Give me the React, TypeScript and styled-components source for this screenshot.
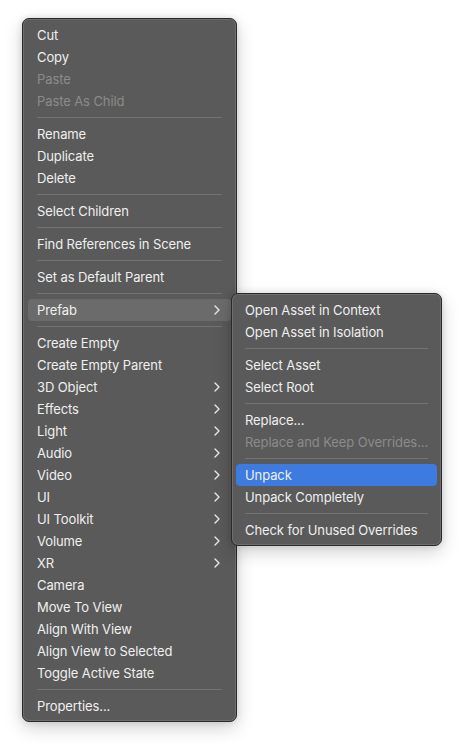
import React from "react";
import styled, { createGlobalStyle } from "styled-components";

const Global = createGlobalStyle`
  html, body { margin: 0; padding: 0; background: #ffffff; }
  body { font-family: Inter, "Liberation Sans", sans-serif; }
  * { box-sizing: border-box; }
`;

const Page = styled.div`
  padding: 18px 0 0 22px;
  width: 465px;
  height: 749px;
`;

const Menu = styled.div<{ $width: number }>`
  width: ${(p) => p.$width}px;
  background: #5a5a5a;
  border: 1px solid #2a2a2a;
  border-radius: 7px;
  box-shadow: inset 0 0 0 1px rgba(255, 255, 255, 0.12), 0 6px 18px rgba(0, 0, 0, 0.18),
    0 0 6px rgba(0, 0, 0, 0.12);
  padding: 5px 5px 4px;
  display: flex;
  flex-direction: column;
`;

const MainMenu = styled(Menu)`
  padding: 5px 5px 4px 5px;
`;

const SubMenu = styled(Menu)`
  position: absolute;
  left: 100%;
  top: -6px;
  z-index: 2;
  padding: 5px 4px 4px 4px;
`;

const Row = styled.div<{ $disabled?: boolean; $state?: "hover" | "active" }>`
  position: relative;
  height: 22px;
  display: flex;
  align-items: center;
  justify-content: space-between;
  padding: 0 11px 0 9px;
  border-radius: 4px;
  font-size: 13px;
  letter-spacing: -0.1px;
  color: ${(p) => (p.$disabled ? "#8b8b8b" : "#efefef")};
  background: ${(p) =>
    p.$state === "hover" ? "#6b6b6b" : p.$state === "active" ? "#3d7be0" : "transparent"};
  white-space: nowrap;
`;

const Separator = styled.div`
  height: 11px;
  display: flex;
  align-items: center;
  padding: 0 9px;
  &::after {
    content: "";
    flex: 1;
    height: 1px;
    background: #737373;
  }
`;

const Chevron = () => (
  <svg width="6" height="10" viewBox="0 0 6 10" fill="none">
    <path d="M1 1l4 4-4 4" stroke="#e8e8e8" strokeWidth="1.4" strokeLinecap="round" strokeLinejoin="round" />
  </svg>
);

type Item =
  | { sep: true }
  | { label: string; disabled?: boolean; sub?: boolean; state?: "hover" | "active"; children?: Item[] };

const prefabItems: Item[] = [
  { label: "Open Asset in Context" },
  { label: "Open Asset in Isolation" },
  { sep: true },
  { label: "Select Asset" },
  { label: "Select Root" },
  { sep: true },
  { label: "Replace..." },
  { label: "Replace and Keep Overrides...", disabled: true },
  { sep: true },
  { label: "Unpack", state: "active" },
  { label: "Unpack Completely" },
  { sep: true },
  { label: "Check for Unused Overrides" },
];

const mainItems: Item[] = [
  { label: "Cut" },
  { label: "Copy" },
  { label: "Paste", disabled: true },
  { label: "Paste As Child", disabled: true },
  { sep: true },
  { label: "Rename" },
  { label: "Duplicate" },
  { label: "Delete" },
  { sep: true },
  { label: "Select Children" },
  { sep: true },
  { label: "Find References in Scene" },
  { sep: true },
  { label: "Set as Default Parent" },
  { sep: true },
  { label: "Prefab", sub: true, state: "hover", children: prefabItems },
  { sep: true },
  { label: "Create Empty" },
  { label: "Create Empty Parent" },
  { label: "3D Object", sub: true },
  { label: "Effects", sub: true },
  { label: "Light", sub: true },
  { label: "Audio", sub: true },
  { label: "Video", sub: true },
  { label: "UI", sub: true },
  { label: "UI Toolkit", sub: true },
  { label: "Volume", sub: true },
  { label: "XR", sub: true },
  { label: "Camera" },
  { label: "Move To View" },
  { label: "Align With View" },
  { label: "Align View to Selected" },
  { label: "Toggle Active State" },
  { sep: true },
  { label: "Properties..." },
];

const renderItems = (items: Item[]) =>
  items.map((it, i) =>
    "sep" in it ? (
      <Separator key={i} />
    ) : (
      <Row key={i} $disabled={it.disabled} $state={it.state}>
        <span>{it.label}</span>
        {it.sub && <Chevron />}
        {it.children && <SubMenu $width={211}>{renderItems(it.children)}</SubMenu>}
      </Row>
    )
  );

export default function App() {
  return (
    <>
      <Global />
      <Page>
        <MainMenu $width={215}>{renderItems(mainItems)}</MainMenu>
      </Page>
    </>
  );
}
